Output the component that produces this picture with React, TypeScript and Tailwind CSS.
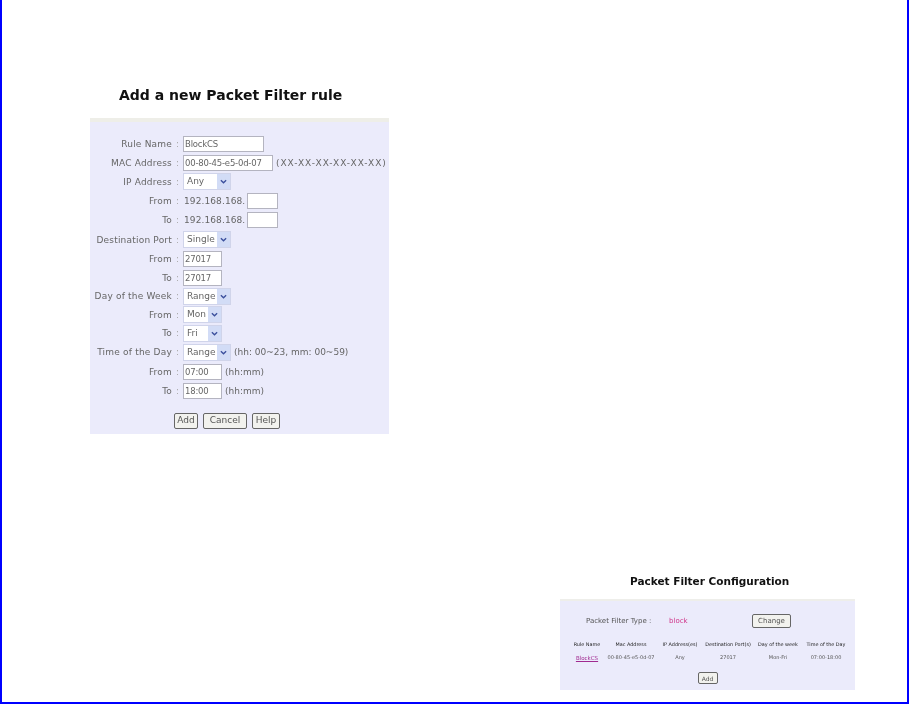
const font = { fontFamily: '"DejaVu Sans", sans-serif' };

const Row = ({ label, h = "h-[19px]", children }: { label: string; h?: string; children: React.ReactNode }) => (
  <div className={`flex items-center ${h}`}>
    <span className="w-[82px] pt-[2px] text-right whitespace-nowrap tracking-[0.2px]">{label}</span>
    <span className="w-[11px] pt-[2px] text-center text-[#aaa]">:</span>
    <div className="flex items-center">{children}</div>
  </div>
);

const Input = ({ value, w }: { value?: string; w: string }) => (
  <input
    readOnly
    value={value ?? ""}
    className={`${w} h-[16px] bg-white border border-[#b4b4c0] px-[1px] text-[8.5px] tracking-[-0.2px] text-[#666] outline-none`}
  />
);

const Select = ({ value, w }: { value: string; w: string }) => (
  <div className={`${w} h-[17px] bg-white border border-[#d0d4ea] flex items-center justify-between pl-[3px]`}>
    <span className="pt-[1px]">{value}</span>
    <span className="w-[13px] h-full bg-[#d2dcf6] flex items-center justify-center">
      <svg viewBox="0 0 8 5" className="w-[7px] h-[5px]">
        <path d="M1 1l3 3 3-3" fill="none" stroke="#3a4f9c" strokeWidth="1.5" />
      </svg>
    </span>
  </div>
);

const Btn = ({ label, w, h = "h-[16px]" }: { label: string; w: string; h?: string }) => (
  <div className={`${w} ${h} bg-[#f2f2ee] border border-[#666] rounded-[2px] flex items-center justify-center text-[#555]`}>
    {label}
  </div>
);

const Hint = ({ children, wide }: { children: React.ReactNode; wide?: boolean }) => (
  <span className={`ml-[3px] pt-[2px] whitespace-nowrap ${wide ? "tracking-[0.95px]" : ""}`}>{children}</span>
);

const columns = [
  ["Rule Name", "w-[44px]"],
  ["Mac Address", "w-[44px]"],
  ["IP Address(es)", "w-[54px]"],
  ["Destination Port(s)", "w-[42px]"],
  ["Day of the week", "w-[58px]"],
  ["Time of the Day", "w-[38px]"],
];
const values = ["BlockCS", "00-80-45-e5-0d-07", "Any", "27017", "Mon-Fri", "07:00-18:00"];

const App = () => {
  return (
    <div className="w-[909px] h-[704px] bg-white border-x-2 border-b-2 border-[#0000ff] overflow-hidden flex flex-col" style={font}>
      {/* Add rule form */}
      <div className="w-[299px] ml-[88px] mt-[85px] blur-[0.4px]">
        <h2 className="h-[33px] pl-[29px] text-[14px] leading-[20px] font-bold text-[#111] whitespace-nowrap">
          Add a new Packet Filter rule
        </h2>
        <div className="h-[4px] bg-[#eeeee8]" />
        <div className="h-[312px] bg-[#ebebfb] text-[9px] text-[#666] pt-[12px]">
          <Row label="Rule Name"><Input value="BlockCS" w="w-[81px]" /></Row>
          <Row label="MAC Address">
            <Input value="00-80-45-e5-0d-07" w="w-[90px]" />
            <Hint wide>(XX-XX-XX-XX-XX-XX)</Hint>
          </Row>
          <Row label="IP Address"><Select value="Any" w="w-[48px]" /></Row>
          <Row label="From">
            <span className="w-[64px] pl-[1px] pt-[2px] tracking-[0.1px]">192.168.168.</span>
            <Input w="w-[31px]" />
          </Row>
          <Row label="To" h="h-[20px]">
            <span className="w-[64px] pl-[1px] pt-[2px] tracking-[0.1px]">192.168.168.</span>
            <Input w="w-[31px]" />
          </Row>
          <Row label="Destination Port"><Select value="Single" w="w-[48px]" /></Row>
          <Row label="From"><Input value="27017" w="w-[39px]" /></Row>
          <Row label="To"><Input value="27017" w="w-[39px]" /></Row>
          <Row label="Day of the Week" h="h-[18px]"><Select value="Range" w="w-[48px]" /></Row>
          <Row label="From"><Select value="Mon" w="w-[39px]" /></Row>
          <Row label="To" h="h-[18px]"><Select value="Fri" w="w-[39px]" /></Row>
          <Row label="Time of the Day" h="h-[20px]">
            <Select value="Range" w="w-[48px]" />
            <Hint>(hh: 00~23, mm: 00~59)</Hint>
          </Row>
          <Row label="From">
            <Input value="07:00" w="w-[39px]" />
            <Hint>(hh:mm)</Hint>
          </Row>
          <Row label="To">
            <Input value="18:00" w="w-[39px]" />
            <Hint>(hh:mm)</Hint>
          </Row>
          <div className="flex gap-[5px] pl-[84px] mt-[13px]">
            <Btn label="Add" w="w-[24px]" />
            <Btn label="Cancel" w="w-[44px]" />
            <Btn label="Help" w="w-[28px]" />
          </div>
        </div>
      </div>

      {/* Configuration summary */}
      <div className="w-[295px] ml-[558px] mt-[138px] blur-[0.6px]">
        <h2 className="h-[27px] pt-[1px] pl-[70px] text-[10.5px] leading-[16px] font-bold text-[#111] whitespace-nowrap">
          Packet Filter Configuration
        </h2>
        <div className="h-[2px] bg-[#eeeeea]" />
        <div className="h-[89px] bg-[#ebebfb] text-[#555]">
          <div className="flex items-center h-[28px] pt-[12px] pl-[26px] text-[7px]">
            <span className="w-[83px] whitespace-nowrap">Packet Filter Type :</span>
            <span className="w-[83px] text-[#d0368a]">block</span>
            <Btn label="Change" w="w-[39px]" h="h-[14px]" />
          </div>
          <div className="flex mt-[9px] pl-[5px] text-[4.9px] h-[14px] items-center text-[#222]">
            {columns.map(([name, w]) => (
              <span key={name} className={`${w} flex justify-center whitespace-nowrap`}>{name}</span>
            ))}
          </div>
          <div className="flex pl-[5px] text-[5px] h-[12px] items-center">
            {values.map((v, i) => (
              <span
                key={v}
                className={`${columns[i][1]} flex justify-center whitespace-nowrap ${i === 0 ? "text-[#a02a90] underline text-[5.5px]" : ""}`}
              >
                {v}
              </span>
            ))}
          </div>
          <div className="flex justify-center mt-[8px] text-[6px]">
            <Btn label="Add" w="w-[20px]" h="h-[12px]" />
          </div>
        </div>
      </div>
    </div>
  );
};

export default App;
